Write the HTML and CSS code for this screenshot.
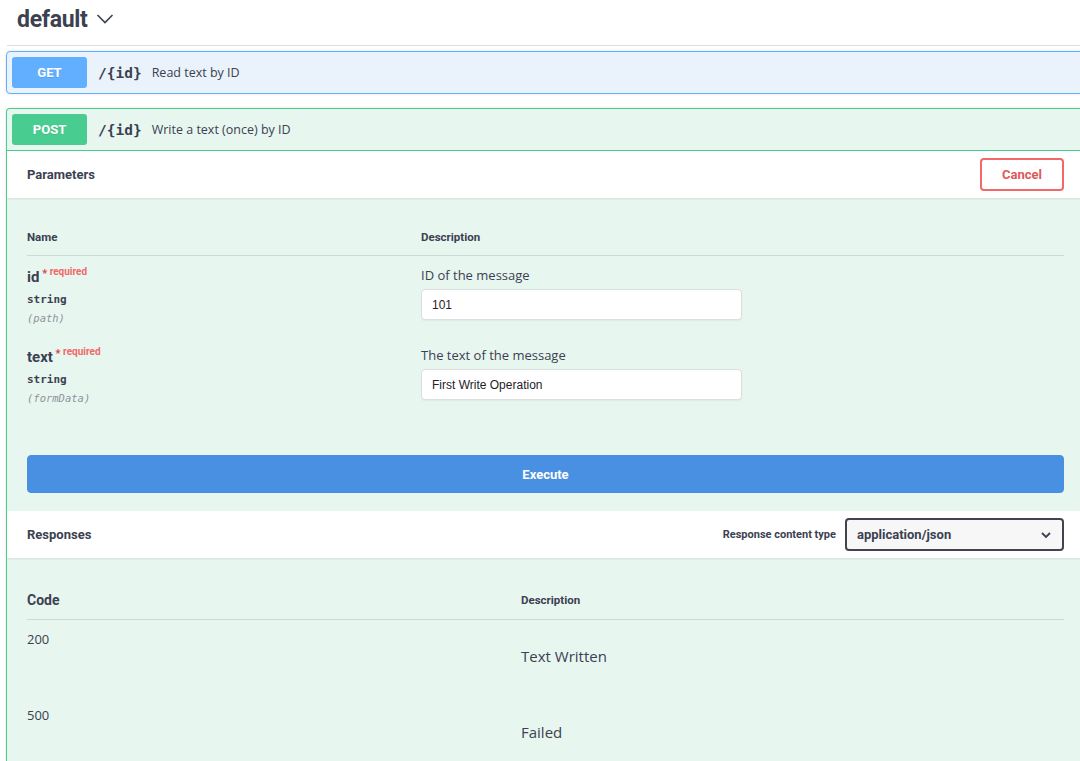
FILE: index.html
```html
<!DOCTYPE html>
<html>
<head>
<meta charset="utf-8">
<link rel="stylesheet" href="styles.css">
</head>
<body>
<div class="page">
  <div class="tag">
    <span class="tag-name">default</span>
    <svg class="tag-chev" width="18" height="12" viewBox="0 0 18 12"><polyline points="1.5,2 9,9.5 16.5,2" fill="none" stroke="#3b4151" stroke-width="1.6"/></svg>
  </div>

  <div class="opblock get">
    <div class="summary">
      <span class="method get-m">GET</span>
      <span class="path">/{id}</span>
      <span class="summary-desc">Read text by ID</span>
    </div>
  </div>

  <div class="opblock post">
    <div class="summary post-summary">
      <span class="method post-m">POST</span>
      <span class="path">/{id}</span>
      <span class="summary-desc">Write a text (once) by ID</span>
    </div>

    <div class="section-header">
      <span class="section-title">Parameters</span>
      <button class="cancel">Cancel</button>
    </div>

    <div class="params">
      <div class="thead">
        <div class="col-name">Name</div>
        <div class="col-desc">Description</div>
      </div>
      <div class="prow">
        <div class="col-name">
          <div class="pname">id<span class="star">&nbsp;*</span><span class="req">&nbsp;required</span></div>
          <div class="ptype">string</div>
          <div class="pin">(path)</div>
        </div>
        <div class="col-desc">
          <div class="pdesc">ID of the message</div>
          <div class="input">101</div>
        </div>
      </div>
      <div class="prow">
        <div class="col-name">
          <div class="pname">text<span class="star">&nbsp;*</span><span class="req">&nbsp;required</span></div>
          <div class="ptype">string</div>
          <div class="pin">(formData)</div>
        </div>
        <div class="col-desc">
          <div class="pdesc">The text of the message</div>
          <div class="input">First Write Operation</div>
        </div>
      </div>
    </div>

    <div class="exec-wrap">
      <button class="execute">Execute</button>
    </div>

    <div class="section-header resp-header">
      <span class="section-title">Responses</span>
      <div class="ctype">
        <span class="ctype-label">Response content type</span>
        <div class="select">
          <span>application/json</span>
          <svg width="12" height="8" viewBox="0 0 12 8"><polyline points="2,2 6,6 10,2" fill="none" stroke="#3b4151" stroke-width="1.8"/></svg>
        </div>
      </div>
    </div>

    <div class="responses">
      <div class="rhead">
        <div class="rcode">Code</div>
        <div class="rdesc-h">Description</div>
      </div>
      <div class="rrow">
        <div class="rcode-v">200</div>
        <div class="rdesc">Text Written</div>
      </div>
      <div class="rrow">
        <div class="rcode-v">500</div>
        <div class="rdesc">Failed</div>
      </div>
    </div>
  </div>
</div>
</body>
</html>
```

FILE: styles.css
```css
html, body {
  margin: 0;
  padding: 0;
  background: #ffffff;
  overflow: hidden;
}
body {
  width: 1080px;
  height: 761px;
  font-family: "Open Sans", "Noto Sans", sans-serif;
  color: #3b4151;
}
.page {
  margin-left: 6px;
  width: 1080px;
}
.tag {
  height: 45px;
  display: flex;
  align-items: center;
  padding-left: 10px;
  border-bottom: 1px solid #dcdde0;
  margin-left: 1px;
  margin-bottom: 5px;
}
.tag-name {
  font-family: "Roboto", "Open Sans", sans-serif;
  font-weight: 700;
  font-size: 23px;
  letter-spacing: -0.3px;
  margin-top: -6px;
}
.tag-chev {
  margin-left: 8px;
  margin-top: -8px;
}
.opblock {
  border-radius: 4px;
  box-shadow: 0 0 3px rgba(0, 0, 0, 0.12);
  margin-bottom: 14px;
}
.get {
  border: 1px solid #61affe;
  background: #eaf3fc;
}
.post {
  border: 1px solid #49cc90;
  border-bottom: 0;
  border-radius: 4px 4px 0 0;
  background: #e8f6f0;
  height: 652px;
  margin-bottom: 0;
  overflow: hidden;
}
.summary {
  display: flex;
  align-items: center;
  padding: 5px;
  height: 31px;
}
.post-summary {
  border-bottom: 1px solid #49cc90;
}
.method {
  width: 75px;
  height: 31px;
  border-radius: 3px;
  color: #fff;
  font-family: "Roboto", "Open Sans", sans-serif;
  font-weight: 700;
  font-size: 13px;
  display: flex;
  align-items: center;
  justify-content: center;
  text-shadow: 0 1px 0 rgba(0, 0, 0, 0.1);
}
.get-m { background: #61affe; }
.post-m { background: #49cc90; }
.path {
  font-family: "DejaVu Sans Mono", monospace;
  font-weight: 700;
  font-size: 14.5px;
  margin-left: 11px;
  color: #3b4151;
}
.summary-desc {
  font-size: 12.5px;
  margin-left: 10px;
  color: #3b4151;
}
.section-header {
  height: 47px;
  background: #fff;
  display: flex;
  align-items: center;
  justify-content: space-between;
  padding: 0 21px 0 20px;
  box-shadow: 0 1px 2px rgba(0, 0, 0, 0.1);
}
.section-title {
  font-family: "Roboto", "Open Sans", sans-serif;
  font-weight: 700;
  font-size: 13px;
}
.cancel {
  width: 84px;
  height: 33px;
  border: 2px solid #f06868;
  border-radius: 4px;
  background: #fff;
  color: #e05858;
  font-family: "Roboto", "Open Sans", sans-serif;
  font-weight: 700;
  font-size: 13px;
  padding: 0;
}
.params {
  padding: 21px 21px 0 20px;
}
.thead {
  display: flex;
  align-items: center;
  height: 36px;
  border-bottom: 1px solid #cfd8d4;
  font-family: "Roboto", "Open Sans", sans-serif;
  font-weight: 700;
  font-size: 11.5px;
}
.col-name {
  width: 394px;
  flex: none;
}
.col-desc {
  flex: 1;
}
.prow {
  display: flex;
  height: 80px;
}
.prow .col-name {
  padding-top: 11px;
}
.prow .col-desc {
  padding-top: 9px;
}
.pname {
  font-family: "Roboto", "Open Sans", sans-serif;
  font-weight: 700;
  font-size: 15px;
  line-height: 20px;
}
.star {
  color: #e03c3c;
  font-size: 11px;
  vertical-align: top;
  line-height: 14px;
}
.req {
  color: #f06868;
  font-size: 10px;
  vertical-align: top;
  line-height: 10px;
  font-weight: 700;
}
.ptype {
  font-family: "DejaVu Sans Mono", monospace;
  font-size: 11px;
  line-height: 19px;
  margin-top: 3px;
  font-weight: 600;
  color: #3b4151;
}
.pin {
  font-family: "DejaVu Sans Mono", monospace;
  font-style: italic;
  font-size: 10.5px;
  line-height: 19px;
  color: #8f939b;
}
.pdesc {
  font-size: 13px;
  line-height: 20px;
}
.input {
  margin-top: 4px;
  width: 309px;
  height: 29px;
  background: #fff;
  border: 1px solid #dcdfe0;
  border-radius: 4px;
  box-shadow: 0 1px 2px rgba(0, 0, 0, 0.05);
  font-family: "Liberation Sans", Arial, sans-serif;
  font-size: 12px;
  display: flex;
  align-items: center;
  padding-left: 10px;
  color: #1f2228;
}
.exec-wrap {
  padding: 39px 21px 18px 20px;
}
.execute {
  width: 100%;
  height: 38px;
  background: #4990e2;
  border: 1px solid #4990e2;
  border-radius: 4px;
  color: #fff;
  font-family: "Roboto", "Open Sans", sans-serif;
  font-weight: 700;
  font-size: 13px;
  display: block;
}
.ctype {
  display: flex;
  align-items: center;
}
.ctype-label {
  font-family: "Roboto", "Open Sans", sans-serif;
  font-weight: 700;
  font-size: 11px;
  margin-right: 9px;
}
.select {
  width: 195px;
  height: 29px;
  border: 2px solid #41444e;
  border-radius: 4px;
  background: #f7f7f7;
  display: flex;
  align-items: center;
  justify-content: space-between;
  padding: 0 10px 0 10px;
  font-family: "Roboto", "Open Sans", sans-serif;
  font-weight: 700;
  font-size: 13px;
}
.responses {
  padding: 23px 21px 0 20px;
}
.rhead {
  display: flex;
  align-items: center;
  height: 38px;
  border-bottom: 1px solid #cfd8d4;
}
.rcode {
  width: 494px;
  flex: none;
  font-family: "Roboto", "Open Sans", sans-serif;
  font-weight: 700;
  font-size: 14px;
}
.rdesc-h {
  font-family: "Roboto", "Open Sans", sans-serif;
  font-weight: 700;
  font-size: 11.5px;
}
.rrow {
  display: flex;
  height: 76px;
}
.rcode-v {
  width: 494px;
  flex: none;
  font-size: 13px;
  padding-top: 9px;
  line-height: 20px;
}
.rdesc {
  font-size: 15px;
  padding-top: 25px;
  line-height: 22px;
}
```
